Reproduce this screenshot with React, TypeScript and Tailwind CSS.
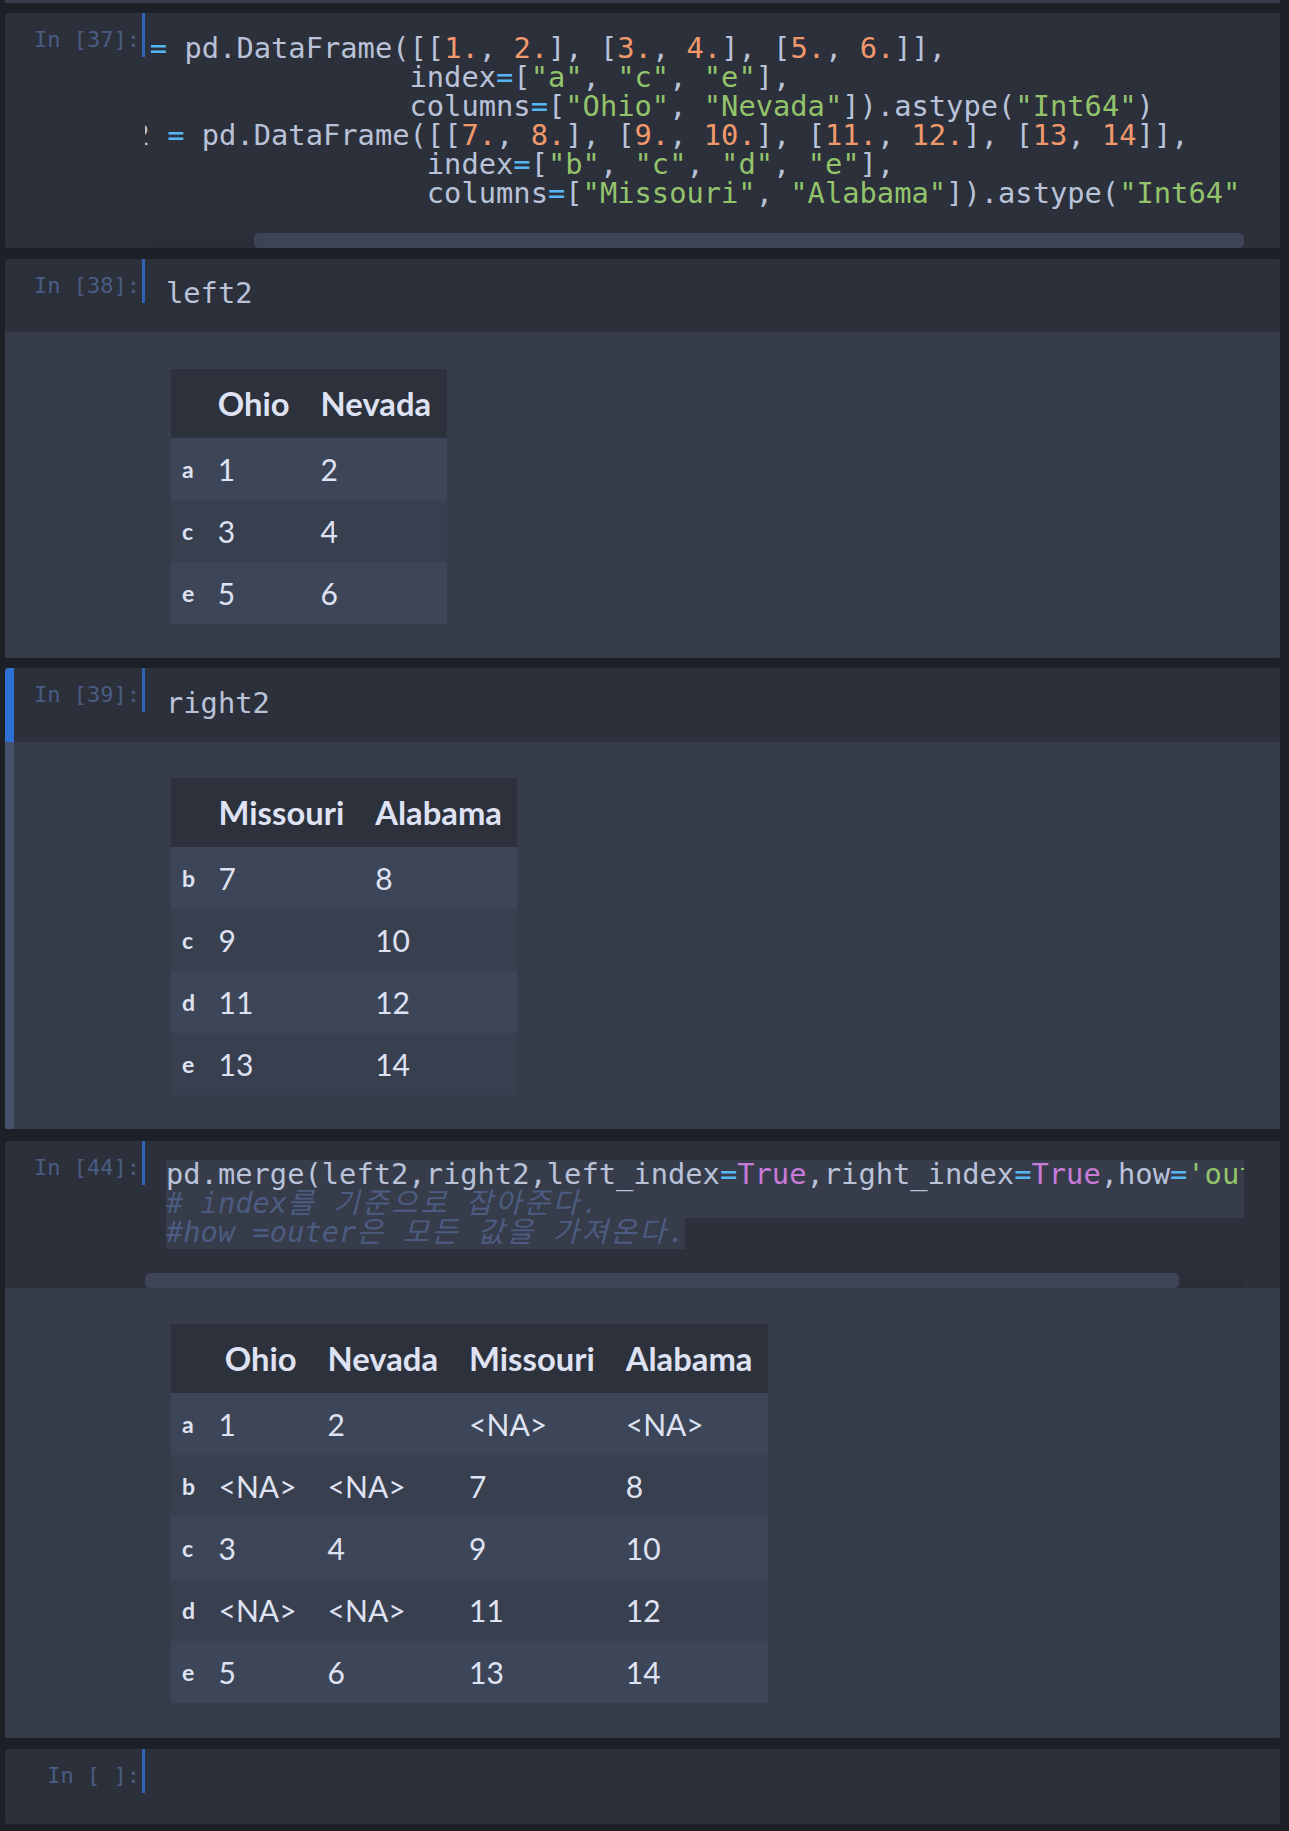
import React from "react";

// token colours for the dark notebook theme
const tok = {
  d: "text-[#b9c2d8]",
  o: "text-[#56b5f2]",
  n: "text-[#f2996b]",
  s: "text-[#93c36b]",
  k: "text-[#c97bd9]",
  c: "text-[#4c5b80] italic",
};

// very small python highlighter, enough for these cells
const highlight = (line: string) => {
  const re = /("[^"]*"|'[^']*'|\bTrue\b|(?<![A-Za-z_\d])\d+\.?|=)/g;
  const out: React.ReactNode[] = [];
  let last = 0;
  let m: RegExpExecArray | null;
  let i = 0;
  while ((m = re.exec(line))) {
    if (m.index > last) out.push(<span key={i++} className={tok.d}>{line.slice(last, m.index)}</span>);
    const t = m[0];
    let cls = tok.n;
    if (t === "=") cls = tok.o;
    else if (t === "True") cls = tok.k;
    else if (t.startsWith('"') || t.startsWith("'")) cls = tok.s;
    out.push(<span key={i++} className={cls}>{t}</span>);
    last = m.index + t.length;
  }
  if (last < line.length) out.push(<span key={i++} className={tok.d}>{line.slice(last)}</span>);
  return out;
};

const comment = (line: string) =>
  line.split(/([\uAC00-\uD7A3]+)/).map((part, i) =>
    /[\uAC00-\uD7A3]/.test(part) ? (
      <span key={i} className="tracking-[2.4px]">{part}</span>
    ) : (
      <span key={i}>{part}</span>
    )
  );

const mono = "font-['DejaVu_Sans_Mono','Noto_Sans_Mono_CJK_KR','Noto_Sans_CJK_KR',monospace]";
const code = `${mono} text-[28.75px] leading-[29px]`;

function Prompt({ n }: { n: string }) {
  return (
    <div
      className={`${mono} w-[131px] h-[44px] shrink-0 border-r-[3px] border-[#2f63b5] pr-[2px] pt-[14px] text-right text-[22px] leading-[25px] text-[#4a5c84] whitespace-pre`}
    >
      {`In [${n}]:`}
    </div>
  );
}

function Scrollbar({ offset, thumb }: { offset: number; thumb: string }) {
  return (
    <div className="h-[15px] bg-[#2a2e39] flex">
      <div className={offset ? "w-[109px] shrink-0" : "w-0"} />
      <div className={`${thumb} h-full rounded-[5px] bg-[#3e4456]`} />
    </div>
  );
}

function Cell({
  n,
  selected,
  children,
  output,
  outPad = "pt-[36px] pb-[35px]",
}: {
  n: string;
  selected?: boolean;
  children: React.ReactNode;
  output?: React.ReactNode;
  outPad?: string;
}) {
  return (
    <div className="rounded-[2px] overflow-hidden bg-[#2c303b]">
      <div className="flex">
        <div className={`w-[9px] shrink-0 ${selected ? "bg-[#2d6fd2] rounded-tl-[4px]" : ""}`} />
        <Prompt n={n} />
        <div className="flex-1 min-w-0 mr-[36px]">{children}</div>
      </div>
      {output && (
        <div className="flex bg-[#363c4a]">
          <div className={`w-[9px] shrink-0 ${selected ? "bg-[#46526c]" : ""}`} />
          <div className="w-[131px] shrink-0" />
          <div className={`pl-[26px] ${outPad}`}>{output}</div>
        </div>
      )}
    </div>
  );
}

function DataTable({ cols, rows }: { cols: string[]; rows: [string, string[]][] }) {
  return (
    <table className="border-collapse font-['Lato','Noto_Sans',sans-serif] text-[#dfe2f2]">
      <thead>
        <tr className="bg-[#2c313c]">
          <th className="h-[69px] pl-[11px] pr-[8px]" />
          {cols.map((c) => (
            <th key={c} className="px-[15.5px] text-right align-middle text-[32.75px] font-bold text-[#dfe2f3]">
              {c}
            </th>
          ))}
        </tr>
      </thead>
      <tbody>
        {rows.map(([idx, vals], r) => (
          <tr key={idx} className={r % 2 === 0 ? "bg-[#3d4658]" : "bg-[#384050]"}>
            <th className="h-[62px] pl-[11px] pr-[8px] text-left align-middle text-[23px] font-bold">{idx}</th>
            {vals.map((v, i) => (
              <td key={i} className="px-[15.5px] text-left align-middle text-[30px] font-normal">
                {v}
              </td>
            ))}
          </tr>
        ))}
      </tbody>
    </table>
  );
}

const cell37 = [
  'left2 = pd.DataFrame([[1., 2.], [3., 4.], [5., 6.]],',
  '                     index=["a", "c", "e"],',
  '                     columns=["Ohio", "Nevada"]).astype("Int64")',
  'right2 = pd.DataFrame([[7., 8.], [9., 10.], [11., 12.], [13, 14]],',
  '                      index=["b", "c", "d", "e"],',
  '                      columns=["Missouri", "Alabama"]).astype("Int64")',
];

const NA = "<NA>";

export default function App() {
  return (
    <div className="w-[1289px] h-[1831px] overflow-hidden bg-[#1e2027] pl-[5px] pr-[9px]">
      <div className="h-[3px] bg-[#363c4a]" />

      {/* In [37] */}
      <div className="mt-[10px]">
        <Cell n="37">
          <div className={`${code} overflow-hidden pl-[21px] pt-[21px] pb-[25px]`}>
            <div className="-ml-[120px]">
              {cell37.map((l, i) => (
                <div key={i} className="h-[29px] whitespace-pre">{highlight(l)}</div>
              ))}
            </div>
          </div>
          <Scrollbar offset={109} thumb="flex-1" />
        </Cell>
      </div>

      {/* In [38] */}
      <div className="mt-[11px]">
        <Cell
          n="38"
          outPad="pt-[37px] pb-[34px]"
          output={
            <DataTable
              cols={["Ohio", "Nevada"]}
              rows={[
                ["a", ["1", "2"]],
                ["c", ["3", "4"]],
                ["e", ["5", "6"]],
              ]}
            />
          }
        >
          <div className={`${code} pl-[21px] pt-[20px] pb-[24px]`}>
            <div className="h-[29px] whitespace-pre">{highlight("left2")}</div>
          </div>
        </Cell>
      </div>

      {/* In [39] */}
      <div className="mt-[10px]">
        <Cell
          n="39"
          selected
          outPad="pt-[36px] pb-[34px]"
          output={
            <DataTable
              cols={["Missouri", "Alabama"]}
              rows={[
                ["b", ["7", "8"]],
                ["c", ["9", "10"]],
                ["d", ["11", "12"]],
                ["e", ["13", "14"]],
              ]}
            />
          }
        >
          <div className={`${code} pl-[21px] pt-[21px] pb-[24px]`}>
            <div className="h-[29px] whitespace-pre">{highlight("right2")}</div>
          </div>
        </Cell>
      </div>

      {/* In [44] */}
      <div className="mt-[12px]">
        <Cell
          n="44"
          output={
            <DataTable
              cols={["Ohio", "Nevada", "Missouri", "Alabama"]}
              rows={[
                ["a", ["1", "2", NA, NA]],
                ["b", [NA, NA, "7", "8"]],
                ["c", ["3", "4", "9", "10"]],
                ["d", [NA, NA, "11", "12"]],
                ["e", ["5", "6", "13", "14"]],
              ]}
            />
          }
        >
          <div className={`${code} overflow-hidden pl-[21px] pt-[19px] pb-[26px]`}>
            <div className="h-[29px] whitespace-pre bg-[#363c4a]">
              {highlight("pd.merge(left2,right2,left_index=True,right_index=True,how='outer')")}
            </div>
            <div className={`h-[29px] whitespace-pre bg-[#363c4a] ${tok.c}`}>{comment("# index를 기준으로 잡아준다.")}</div>
            <div className="h-[29px] whitespace-pre">
              <span className={`bg-[#363c4a] ${tok.c}`}>{comment("#how =outer은 모든 값을 가져온다.")}</span>
            </div>
          </div>
          <Scrollbar offset={0} thumb="w-[1034px]" />
        </Cell>
      </div>

      {/* In [ ] */}
      <div className="mt-[11px]">
        <Cell n=" ">
          <div className={`${code} pl-[21px] pt-[20px] pb-[26px]`}>
            <div className="h-[29px] whitespace-pre"> </div>
          </div>
        </Cell>
      </div>
    </div>
  );
}
